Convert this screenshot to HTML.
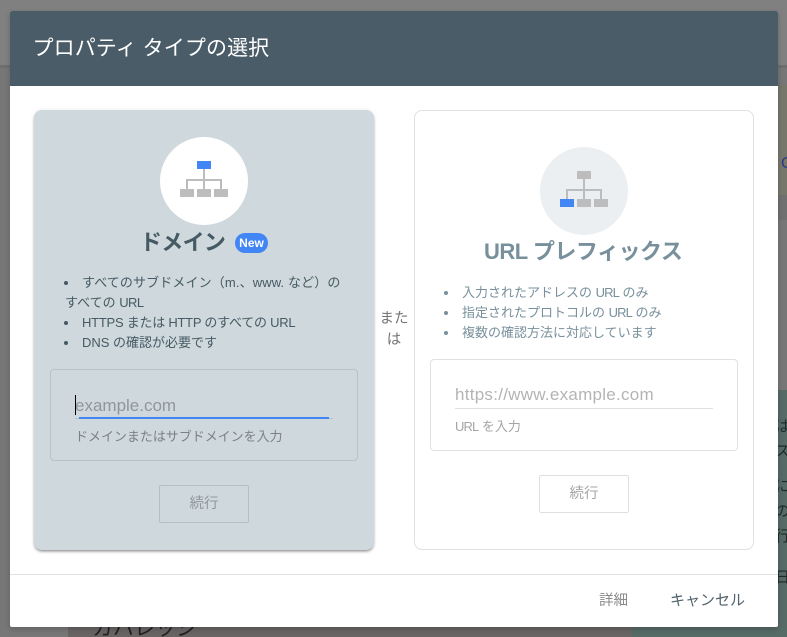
<!DOCTYPE html>
<html lang="ja"><head><meta charset="utf-8"><style>
html,body{margin:0;padding:0;width:787px;height:637px;overflow:hidden;background:#777}
#root{position:absolute;left:0;top:0;width:787px;height:637px;overflow:hidden;background:#777;font-family:"Liberation Sans","Noto Sans CJK JP",sans-serif}
.a{position:absolute;white-space:nowrap}
.r{position:absolute;box-sizing:border-box}
ul{position:absolute;margin:0;padding:0;list-style:none;font-size:13px;line-height:20px}
li{white-space:nowrap;padding-left:18px;position:relative}
li:before{content:"";position:absolute;left:0;top:8px;width:4px;height:4px;border-radius:50%;background:currentColor}
li.n{padding-left:0;margin-left:1px}
li.n:before{display:none}
.l{letter-spacing:-.55px}
.bg{position:absolute;left:775px;font-size:15px;line-height:20px;color:#1e2a28;white-space:nowrap}
</style></head><body><div id="root">
<div class="r" style="left:0;top:0;width:787px;height:65px;background:#808080"></div>
<div class="r" style="left:0;top:65px;width:787px;height:3px;background:#6e6e6e"></div>
<div class="r" style="left:778px;top:85px;width:9px;height:110px;background:#77776b"></div>
<div class="a" style="left:781px;top:154px;font-size:16px;line-height:20px;color:#2b3d85">C</div>
<div class="r" style="left:778px;top:195px;width:9px;height:25px;background:#707070"></div>
<div class="r" style="left:778px;top:390px;width:9px;height:247px;background:#566a66"></div>
<div class="r" style="left:632px;top:627px;width:155px;height:10px;background:#566a66"></div>
<div class="r" style="left:68px;top:627px;width:564px;height:10px;background:#686464"></div>
<div class="a" style="left:92px;top:617px;font-size:21px;line-height:24px;color:#222">カバレッジ</div>
<div class="bg" style="top:417px">は</div>
<div class="bg" style="top:442px">ス</div>
<div class="bg" style="top:477px">に</div>
<div class="bg" style="top:502px">の</div>
<div class="bg" style="top:527px">行</div>
<div class="bg" style="top:568px">日</div>

<div class="r" style="left:10px;top:11px;width:768px;height:616px;background:#fff;border-radius:2px;box-shadow:0 2px 6px rgba(0,0,0,.2);overflow:hidden">
<div class="r" style="left:0;top:0;width:768px;height:75px;background:#4a5c67"></div>
<div class="a" style="left:22.500px;top:22px;font-size:21px;line-height:32px;color:#fff;letter-spacing:.1px">プロパティ タイプの選択</div>
<div class="r" style="left:0;top:563px;width:768px;height:1px;background:#e0e0e0"></div>
<div class="a" style="left:589px;top:580px;font-size:14.500px;line-height:20px;color:#8a8a8a">詳細</div>
<div class="a" style="left:660px;top:580px;font-size:15px;line-height:20px;color:#50626c">キャンセル</div>
</div>

<!-- left card -->
<div class="r" style="left:34px;top:110px;width:340px;height:440px;background:#cfd8dc;border-radius:8px;box-shadow:0 2px 3px -1px rgba(0,0,0,.5),0 0 4px rgba(0,0,0,.08)"></div>
<svg class="r" style="left:160px;top:137px" width="88" height="88" viewBox="0 0 88 88"><circle cx="44" cy="44" r="44" fill="#fff"/>
<path d="M44 32V52M27 52V43H61V52" fill="none" stroke="#bdbdbd" stroke-width="2"/>
<rect x="37" y="24" width="14" height="8" fill="#4285f4"/><rect x="20" y="52" width="14" height="8" fill="#bdbdbd"/><rect x="37" y="52" width="14" height="8" fill="#bdbdbd"/><rect x="54" y="52" width="14" height="8" fill="#bdbdbd"/></svg>
<div class="a" style="left:140px;top:226px;font-size:22px;line-height:34px;font-weight:700;color:#455a64;letter-spacing:-.7px">ドメイン</div>
<div class="r" style="left:235px;top:233px;width:33px;height:20px;border-radius:10px;background:#4285f4;color:#fff;font-size:12px;font-weight:700;line-height:20px;text-align:center">New</div>
<ul style="left:64px;top:273px;color:#455a64">
<li style="letter-spacing:.12px">すべてのサブドメイン（m.、www. など）の</li>
<li class="n">すべての <span class="l">URL</span></li>
<li style="letter-spacing:-.25px">HTTPS または HTTP のすべての URL</li>
<li>DNS の確認が必要です</li>
</ul>
<div class="r" style="left:50px;top:369px;width:308px;height:92px;border:1px solid #b9c2c5;border-radius:4px"></div>
<div class="a" style="left:75px;top:396px;font-size:17px;line-height:20px;color:#8f979a">example.com</div>
<div class="r" style="left:75px;top:395px;width:1px;height:20px;background:#000"></div>
<div class="r" style="left:75px;top:418px;width:258px;height:1px;background:#b9c2c5"></div>
<div class="r" style="left:79px;top:417px;width:250px;height:2px;background:#4285f4"></div>
<div class="a" style="left:75px;top:428px;font-size:13px;line-height:18px;color:#7b8285;letter-spacing:-.03px">ドメインまたはサブドメインを入力</div>
<div class="r" style="left:159px;top:485px;width:90px;height:38px;border:1px solid #b5bec1;border-radius:2px;font-size:14.500px;line-height:36px;text-align:center;color:#8f979a">続行</div>

<!-- または -->
<div class="a" style="left:374px;top:309px;width:40px;text-align:center;font-size:14.500px;line-height:21px;color:#747474;white-space:normal">また<br>は</div>

<!-- right card -->
<div class="r" style="left:414px;top:110px;width:340px;height:440px;border:1px solid #e0e0e0;border-radius:8px;background:#fff"></div>
<svg class="r" style="left:540px;top:147px" width="88" height="88" viewBox="0 0 88 88"><circle cx="44" cy="44" r="44" fill="#eceff1"/>
<path d="M44 32V52M27 52V43H61V52" fill="none" stroke="#bdbdbd" stroke-width="2"/>
<rect x="37" y="24" width="14" height="8" fill="#bdbdbd"/><rect x="20" y="52" width="14" height="8" fill="#4285f4"/><rect x="37" y="52" width="14" height="8" fill="#bdbdbd"/><rect x="54" y="52" width="14" height="8" fill="#bdbdbd"/></svg>
<div class="a" style="left:484px;top:235px;font-size:22px;line-height:34px;font-weight:700;color:#78909c;letter-spacing:-.5px">URL プレフィックス</div>
<ul style="left:444px;top:283px;color:#78909c">
<li>入力されたアドレスの <span class="l" style="letter-spacing:-.9px">URL</span> のみ</li>
<li>指定されたプロトコルの <span class="l" style="letter-spacing:-.9px">URL</span> のみ</li>
<li>複数の確認方法に対応しています</li>
</ul>
<div class="r" style="left:430px;top:359px;width:308px;height:92px;border:1px solid #e0e0e0;border-radius:4px"></div>
<div class="a" style="left:455px;top:385px;font-size:17px;line-height:20px;letter-spacing:.27px;color:#b4b4b4">https://www.example.com</div>
<div class="r" style="left:455px;top:408px;width:258px;height:1px;background:#e0e0e0"></div>
<div class="a" style="left:455px;top:418px;font-size:13px;line-height:18px;color:#a5a5a5"><span class="l" style="letter-spacing:-.9px">URL</span> を入力</div>
<div class="r" style="left:539px;top:475px;width:90px;height:38px;border:1px solid #e0e0e0;border-radius:2px;font-size:14.500px;line-height:36px;text-align:center;color:#a5a5a5">続行</div>
</div></body></html>
